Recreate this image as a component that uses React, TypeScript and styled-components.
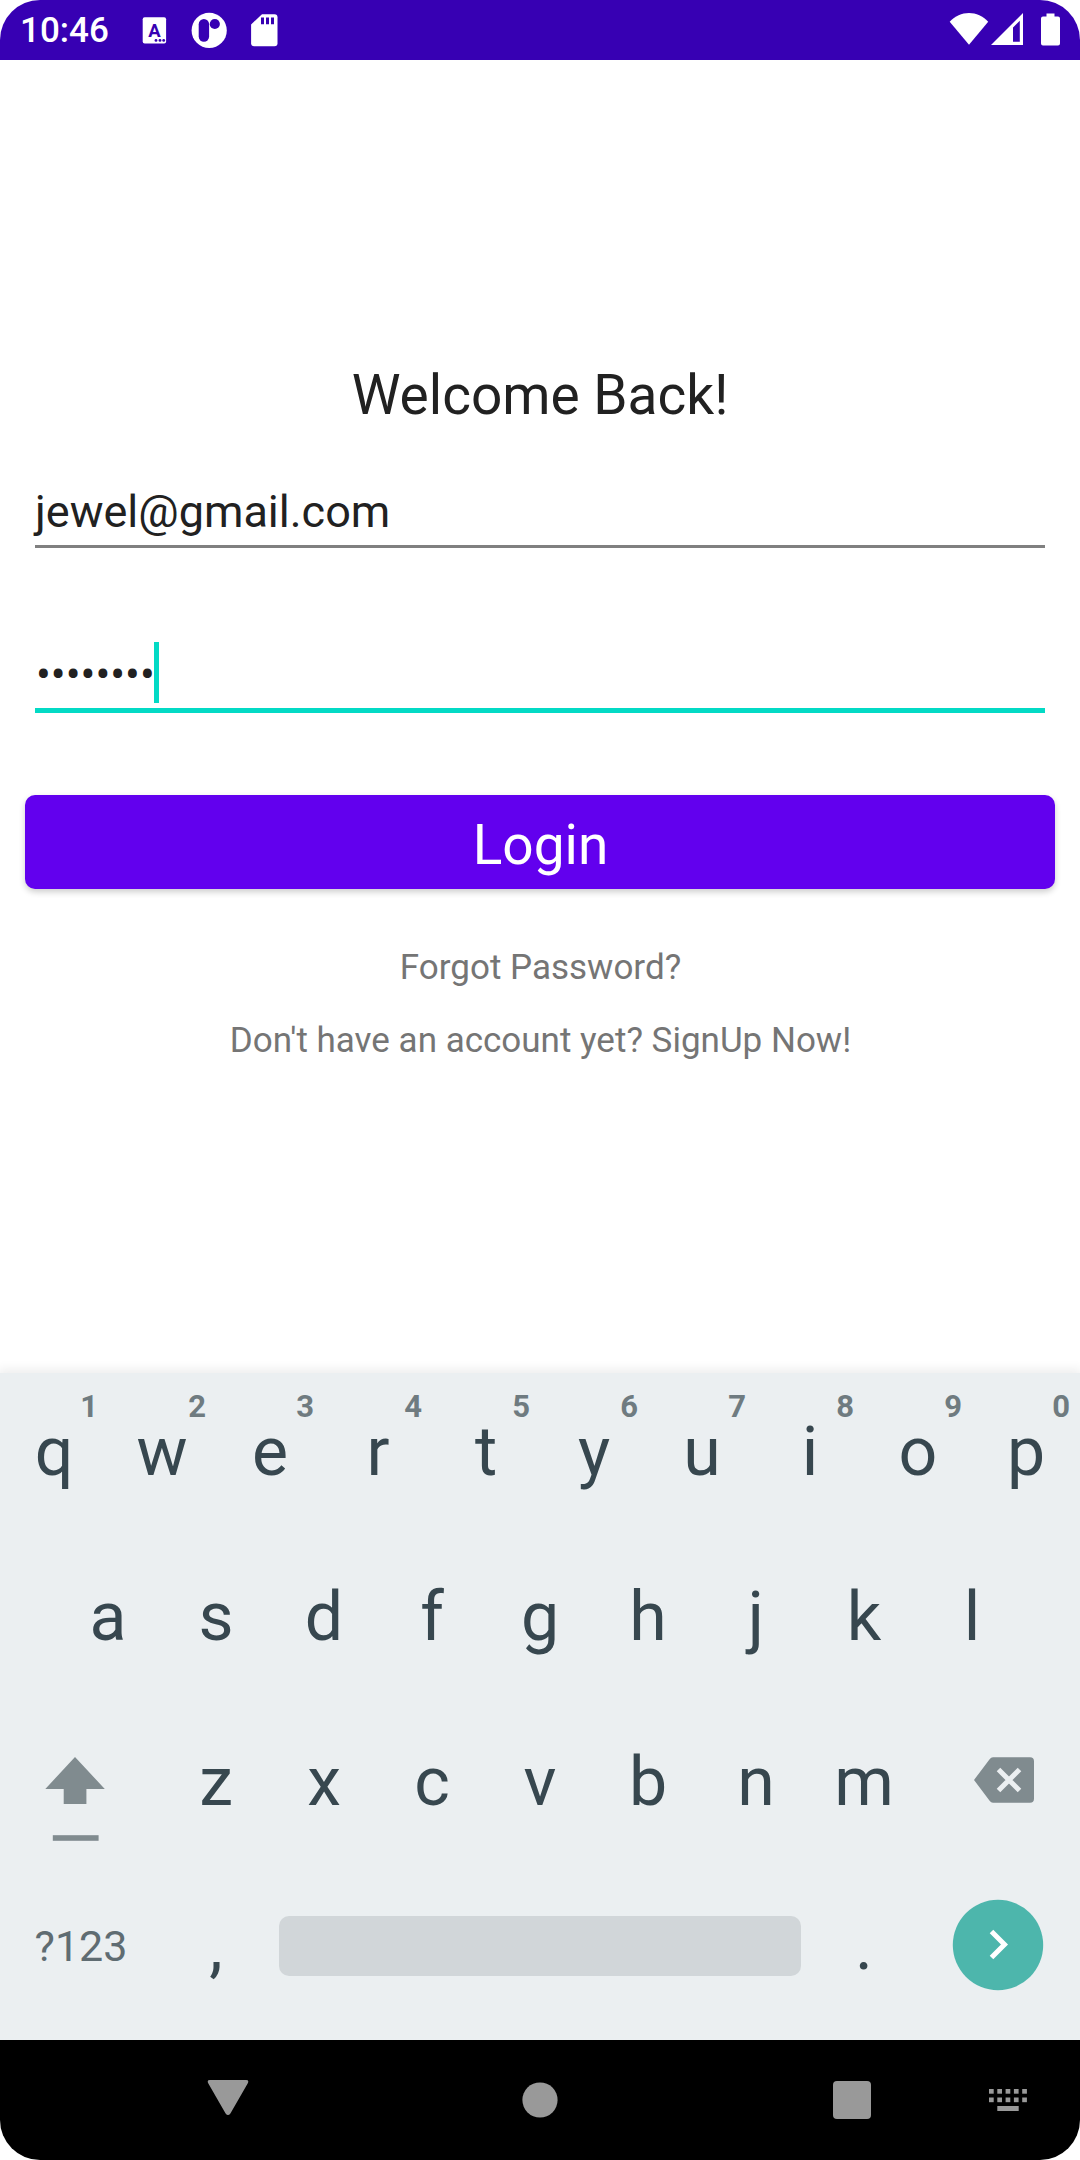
import React from "react";
import styled, { createGlobalStyle } from "styled-components";

const GlobalStyle = createGlobalStyle`
  *, *::before, *::after { box-sizing: border-box; }
  html, body { margin: 0; padding: 0; background: #ffffff; }
  button { border: 0; padding: 0; margin: 0; background: none; font: inherit; color: inherit; }
`;

const Phone = styled.div`
  width: 1080px;
  height: 2160px;
  display: flex;
  flex-direction: column;
  overflow: hidden;
  border-radius: 40px;
  background: #fff;
  font-family: Roboto, "Noto Sans", sans-serif;
`;

const StatusBar = styled.header`
  height: 60px;
  flex: none;
  display: flex;
  align-items: center;
  justify-content: space-between;
  padding: 0 20px;
  background: #3700b3;
  color: #fff;
`;

const StatusGroup = styled.div`
  display: flex;
  align-items: center;
  height: 60px;
`;

const Clock = styled.span`
  width: 117px;
  padding-top: 2px;
  font-size: 35px;
  font-weight: 500;
  line-height: 44px;
  white-space: nowrap;
`;

const Icon = styled.svg`
  display: block;
  flex: none;
`;

const Screen = styled.main`
  flex: 1;
  display: flex;
  flex-direction: column;
  padding: 303px 25px 0;
`;

const Title = styled.h1`
  margin: 0 0 59px;
  font-size: 55px;
  font-weight: 400;
  line-height: 64px;
  text-align: center;
  color: #212121;
`;

const Field = styled.div<{ $focused?: boolean }>`
  display: flex;
  align-items: center;
  margin: 0 10px ${(p) => (p.$focused ? 82 : 94)}px;
  height: ${(p) => (p.$focused ? 71 : 62)}px;
  padding-bottom: ${(p) => (p.$focused ? 5 : 7)}px;
  border-bottom: ${(p) => (p.$focused ? "5px solid #03dac5" : "3px solid #808080")};
  font-size: 45px;
  line-height: 52px;
  color: #212121;
`;

const Password = styled.span`
  padding: 4px 0 0 1px;
  margin-right: -1px;
  font-size: 44px;
`;

const Cursor = styled.span`
  width: 5px;
  height: 61px;
  background: #03dac5;
`;

const LoginButton = styled.button`
  height: 94px;
  flex: none;
  margin-bottom: 57px;
  padding: 6px 0 0 1px;
  border-radius: 10px;
  background: #6200ee;
  color: #fff;
  font-size: 55px;
  line-height: 88px;
  box-shadow: 0 3px 6px rgba(0, 0, 0, 0.2);
`;

const Link = styled.p`
  margin: 0 0 29px;
  padding-left: 1px;
  font-size: 35px;
  line-height: 44px;
  text-align: center;
  color: #757575;
`;

const Keyboard = styled.section`
  height: 667px;
  flex: none;
  display: flex;
  flex-direction: column;
  padding-top: 7px;
  background: #ebeff1;
  color: #37474f;
  box-shadow: 0 -2px 10px 2px rgba(0, 0, 0, 0.07);
`;

const KeyRow = styled.div<{ $inset?: number }>`
  display: flex;
  height: 165px;
  padding: 0 ${(p) => p.$inset ?? 0}px;
`;

const Key = styled.button<{ $wide?: boolean }>`
  position: relative;
  width: ${(p) => (p.$wide ? 162 : 108)}px;
  height: 165px;
  display: flex;
  align-items: center;
  justify-content: center;
  font-size: 68px;
  line-height: 80px;
  padding-bottom: 21px;
`;

const Hint = styled.span`
  position: absolute;
  top: 9px;
  right: 10px;
  font-size: 31px;
  font-weight: 700;
  line-height: 36px;
  color: #6f7b80;
`;

const SymbolKey = styled(Key)`
  font-size: 43px;
  line-height: 50px;
  color: #5f6c72;
  padding-bottom: 23px;
`;

const SpaceKey = styled.button`
  width: 522px;
  height: 60px;
  margin: 41px 9px 0;
  border-radius: 10px;
  background: #d1d6d9;
`;

const NavBar = styled.nav`
  height: 120px;
  flex: none;
  background: #000;
  display: grid;
  grid-template-columns: 384px 312px 293px 91px;
  align-items: center;
`;

const NavItem = styled.button<{ $start: number }>`
  padding-left: ${(p) => p.$start}px;
  display: flex;
`;

const NotificationIcons = () => (
  <Icon width="144" height="60" viewBox="137 0 144 60" fill="#fff">
    <rect x="142.7" y="17.2" width="23.4" height="26.4" rx="2" />
    <text x="154.5" y="36.8" textAnchor="middle" fontFamily="Roboto" fontWeight="700" fontSize="18.5" fill="#3700b3">A</text>
    <g fill="#3700b3">
      <circle cx="156" cy="40.4" r="1.4" />
      <circle cx="160" cy="40.4" r="1.4" />
      <circle cx="163.7" cy="40.4" r="1.4" />
    </g>
    <circle cx="209.2" cy="30.4" r="17.6" />
    <rect x="198.7" y="19" width="10.4" height="22.8" rx="5.2" fill="#3700b3" />
    <circle cx="214.8" cy="24" r="5.1" fill="#3700b3" />
    <path d="M262 14.2h12.5a3 3 0 0 1 3 3v26a3 3 0 0 1-3 3h-20.4a3 3 0 0 1-3-3V24.5z" />
    <path d="M261 17.6h3v6.6h-3zM266 17.6h3v6.6h-3zM271 17.6h3v6.6h-3z" fill="#3700b3" />
  </Icon>
);

const SystemIcons = () => (
  <Icon width="112" height="60" viewBox="948 0 112 60" fill="#fff">
    <path d="M949.7 21.8C960 10.2 978 10.2 988.2 21.8L969 44.8z" />
    <path fillRule="evenodd" d="M1023 13v32h-32zM1019.8 20.7L1013 27.5V41.8h6.8z" />
    <path d="M1046.5 13.4h8v3.2h3.5a2 2 0 0 1 2 2v25a2 2 0 0 1-2 2h-15a2 2 0 0 1-2-2v-25a2 2 0 0 1 2-2h3.5z" />
  </Icon>
);

const ShiftIcon = () => (
  <Icon width="60" height="86" viewBox="45 1756 60 86" fill="#808b8f">
    <path d="M75 1757l29.8 32H86.4v15H63.7v-15H45.3z" />
    <rect x="52.8" y="1835.2" width="45.8" height="5.6" />
  </Icon>
);

const BackspaceIcon = () => (
  <Icon width="60" height="46" viewBox="974 1757 60 46">
    <path d="M993 1757.2h37a4 4 0 0 1 4 4v37.6a4 4 0 0 1-4 4h-37q-2 0-3.4-2L974 1780l15.6-20.8q1.4-2 3.4-2z" fill="#808b8f" />
    <path d="M998.5 1769.5l21 21M1019.5 1769.5l-21 21" stroke="#ebeff1" strokeWidth="5" />
  </Icon>
);

const EnterIcon = () => (
  <Icon width="92" height="92" viewBox="-46 -46 92 92">
    <circle r="45.2" fill="#4db6ac" />
    <path d="M-6.5 -13.5L6.5 -0.5L-6.5 12.5" fill="none" stroke="#fff" strokeWidth="5" />
  </Icon>
);

const IconKey = styled(Key)<{ $top: number; $left: number }>`
  align-items: flex-start;
  justify-content: flex-start;
  padding: ${(p) => p.$top}px 0 0 ${(p) => p.$left}px;
`;

const PunctuationKey = styled(Key)`
  padding-bottom: 23px;
`;

const topRow = "qwertyuiop".split("");
const homeRow = "asdfghjkl".split("");
const bottomRow = "zxcvbnm".split("");

export default function App() {
  return (
    <>
      <GlobalStyle />
      <Phone>
        <StatusBar>
          <StatusGroup>
            <Clock>10:46</Clock>
            <NotificationIcons />
          </StatusGroup>
          <SystemIcons />
        </StatusBar>
        <Screen>
          <Title>Welcome Back!</Title>
          <Field>jewel@gmail.com</Field>
          <Field $focused>
            <Password>••••••••</Password>
            <Cursor />
          </Field>
          <LoginButton>Login</LoginButton>
          <Link>Forgot Password?</Link>
          <Link>Don't have an account yet? SignUp Now!</Link>
        </Screen>
        <Keyboard>
          <KeyRow>
            {topRow.map((letter, i) => (
              <Key key={letter}>
                {letter}
                <Hint>{(i + 1) % 10}</Hint>
              </Key>
            ))}
          </KeyRow>
          <KeyRow $inset={54}>
            {homeRow.map((letter) => (
              <Key key={letter}>{letter}</Key>
            ))}
          </KeyRow>
          <KeyRow>
            <IconKey $wide $top={46} $left={45}>
              <ShiftIcon />
            </IconKey>
            {bottomRow.map((letter) => (
              <Key key={letter}>{letter}</Key>
            ))}
            <IconKey $wide $top={47} $left={56}>
              <BackspaceIcon />
            </IconKey>
          </KeyRow>
          <KeyRow>
            <SymbolKey $wide>?123</SymbolKey>
            <PunctuationKey>,</PunctuationKey>
            <SpaceKey aria-label="Space" />
            <PunctuationKey>.</PunctuationKey>
            <IconKey $wide $top={24.4} $left={34.4}>
              <EnterIcon />
            </IconKey>
          </KeyRow>
        </Keyboard>
        <NavBar>
          <NavItem $start={207}>
            <Icon width="42" height="40" viewBox="207 2080 42 40" fill="#999">
              <path d="M210 2080h36q3.4 0 1.8 3.2l-17.4 30.4q-2.4 3-4.8 0l-17.4-30.4q-1.6-3.2 1.8-3.2z" />
            </Icon>
          </NavItem>
          <NavItem $start={138}>
            <Icon width="36" height="36" viewBox="-18 -18 36 36">
              <circle r="17.6" fill="#999" />
            </Icon>
          </NavItem>
          <NavItem $start={137}>
            <Icon width="38" height="38" viewBox="0 0 38 38">
              <rect width="38" height="38" rx="4" fill="#999" />
            </Icon>
          </NavItem>
          <NavItem $start={0}>
            <Icon width="38" height="22" viewBox="0 0 38 22" fill="#999">
              {[0, 1, 2, 3, 4].map((c) => (
                <React.Fragment key={c}>
                  <rect x={c * 8.3} y="0" width="4.7" height="4.7" />
                  <rect x={c * 8.3} y="8.5" width="4.7" height="4.7" />
                </React.Fragment>
              ))}
              <rect x="8.3" y="17" width="21.4" height="5" />
            </Icon>
          </NavItem>
        </NavBar>
      </Phone>
    </>
  );
}
